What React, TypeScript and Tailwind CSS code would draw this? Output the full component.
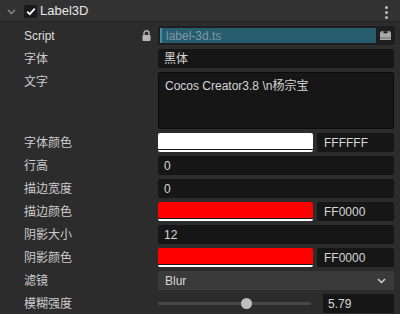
import React from "react";

const font = { fontFamily: '"Liberation Sans", "Noto Sans CJK SC", sans-serif' };

function Row({ label, children, tall }: { label: string; children: React.ReactNode; tall?: boolean }) {
  return (
    <div className="flex items-start">
      <div className="w-[136px] shrink-0 pl-[24px] h-[19px] flex items-center text-[12px] text-[#cccccc] leading-none">
        {label}
      </div>
      <div className="w-[22px] shrink-0" />
      <div className={"flex-1 mr-[6px] " + (tall ? "" : "h-[19px]")}>{children}</div>
    </div>
  );
}

function Field({ value }: { value: string }) {
  return (
    <div className="h-[19px] bg-[#161616] rounded-[2px] flex items-center pl-[6px] text-[12px] text-[#d6d6d6]">{value}</div>
  );
}

function ColorField({ color, hex }: { color: string; hex: string }) {
  return (
    <div className="flex h-[19px] gap-[4px]">
      <div className="w-[155px] h-[19px] flex flex-col bg-[#161616] rounded-[2px] overflow-hidden">
        <div className="h-[16px]" style={{ background: color }} />
        <div className="h-[1px] bg-[#161616]" />
        <div className="h-[2px] bg-white" />
      </div>
      <div className="flex-1 bg-[#161616] rounded-[2px] flex items-center pl-[7px] text-[12px] text-[#d6d6d6]">{hex}</div>
    </div>
  );
}

export default function App() {
  return (
    <div className="w-[400px] h-[314px] bg-[#2c2c2c] overflow-hidden" style={font}>
      <div className="h-[22px] bg-[#323232] border-b border-[#262626] flex items-center relative">
        <svg className="absolute left-[7px] top-[9px]" width="9" height="6" viewBox="0 0 9 6">
          <path d="M1 1 L4.5 4.5 L8 1" stroke="#8a8a8a" strokeWidth="1.4" fill="none" />
        </svg>
        <div className="absolute left-[24px] top-[5px] w-[13px] h-[13px] bg-[#1a1a1a] rounded-[2px] flex items-center justify-center">
          <svg width="10" height="9" viewBox="0 0 10 9">
            <path d="M1.2 4.6 L3.8 7.2 L8.8 1.6" stroke="#ffffff" strokeWidth="1.8" fill="none" />
          </svg>
        </div>
        <div className="absolute left-[40px] top-[3px] text-[13px] text-[#e8e8e8] leading-[16px]">Label3D</div>
        <div className="absolute left-[385px] top-[6px] flex flex-col gap-[2px]">
          <div className="w-[3px] h-[3px] rounded-full bg-[#bdbdbd]" />
          <div className="w-[3px] h-[3px] rounded-full bg-[#bdbdbd]" />
          <div className="w-[3px] h-[3px] rounded-full bg-[#bdbdbd]" />
        </div>
      </div>
      <div className="pt-[4px] flex flex-col gap-[4px]">
        <div className="flex items-start">
          <div className="w-[136px] shrink-0 pl-[24px] h-[19px] flex items-center text-[12px] text-[#dddddd] leading-none">Script</div>
          <div className="w-[22px] shrink-0 h-[19px] flex items-center justify-start pl-[6px]">
            <svg width="9" height="11" viewBox="0 0 9 11">
              <path d="M2 5 V3.2 A2.5 2.5 0 0 1 7 3.2 V5" stroke="#b5b5b5" strokeWidth="1.4" fill="none" />
              <rect x="0.5" y="5" width="8" height="6" rx="1" fill="#b5b5b5" />
            </svg>
          </div>
          <div className="flex-1 mr-[5px] h-[19px] bg-[#1e1e1e] rounded-[2px] flex items-center p-[2px] gap-[3px]">
            <div className="flex-1 h-[15px] bg-[#275d6e] border-l-2 border-[#3d8fa6] flex items-center pl-[4px] text-[12px] text-[#7d99a6]">label-3d.ts</div>
            <svg width="13" height="11" viewBox="0 0 13 11" className="mr-[1px]">
              <path d="M1 3.5 Q1 1 3.5 1 H9.5 Q12 1 12 3.5 V10 H1 Z" fill="#a9a9a9" />
              <path d="M4 1.2 A2.5 2.3 0 0 0 9 1.2 Z" fill="#1e1e1e" />
              <rect x="1" y="7.5" width="11" height="1" fill="#6a6a6a" />
            </svg>
          </div>
        </div>
        <Row label="字体"><Field value="黑体" /></Row>
        <Row label="文字" tall>
          <div className="h-[57px] bg-[#161616] border border-[#0c0c0c] rounded-[2px] pl-[6px] pt-[6px] text-[12px] text-[#d6d6d6] leading-[14px]">
            Cocos Creator3.8 \n杨宗宝
          </div>
        </Row>
        <Row label="字体颜色"><ColorField color="#ffffff" hex="FFFFFF" /></Row>
        <Row label="行高"><Field value="0" /></Row>
        <Row label="描边宽度"><Field value="0" /></Row>
        <Row label="描边颜色"><ColorField color="#ff0000" hex="FF0000" /></Row>
        <Row label="阴影大小"><Field value="12" /></Row>
        <Row label="阴影颜色"><ColorField color="#ff0000" hex="FF0000" /></Row>
        <Row label="滤镜">
          <div className="h-[19px] bg-[#3a3a3a] rounded-[2px] flex items-center justify-between pl-[7px] pr-[8px] text-[12px] text-[#d6d6d6]">
            <span>Blur</span>
            <svg width="9" height="6" viewBox="0 0 9 6">
              <path d="M1 1 L4.5 4.5 L8 1" stroke="#cfcfcf" strokeWidth="1.5" fill="none" />
            </svg>
          </div>
        </Row>
        <Row label="模糊强度">
          <div className="flex h-[19px] items-center">
            <div className="w-[153px] relative h-[19px] flex items-center">
              <div className="w-full h-[3px] bg-[#474747] rounded-full" />
              <div className="absolute left-[83px] top-[4px] w-[11px] h-[11px] rounded-full bg-[#bdbdbd]" />
            </div>
            <div className="w-[12px]" />
            <div className="flex-1 h-[19px] bg-[#161616] rounded-[2px] flex items-center pl-[5px] text-[12px] text-[#d6d6d6]">5.79</div>
          </div>
        </Row>
      </div>
    </div>
  );
}
